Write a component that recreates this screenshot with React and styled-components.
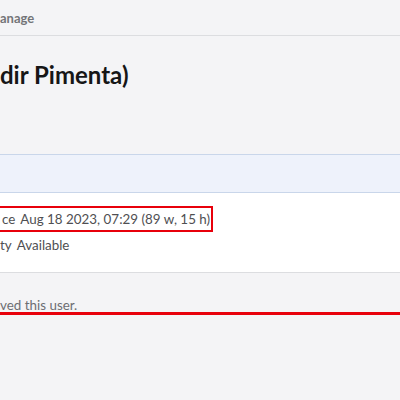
import React from "react";
import styled, { createGlobalStyle } from "styled-components";

const Global = createGlobalStyle`
  html, body { margin: 0; padding: 0; background: #f4f4f6; }
  body { font-family: Lato, "Open Sans", sans-serif; overflow: hidden; }
`;

const Page = styled.div`
  width: 400px;
  height: 400px;
  overflow: hidden;
  background: #f4f4f6;
  display: flex;
  flex-direction: column;
`;

const TopBar = styled.div`
  height: 36px;
  border-bottom: 1px solid #dcdde0;
  display: flex;
  align-items: center;
  font-size: 13px;
  font-weight: 700;
  color: #737478;
  box-sizing: border-box;
  padding-top: 1px;
`;

const Title = styled.h1`
  margin: 25px 0 0;
  font-size: 24px;
  font-weight: 700;
  color: #161616;
  line-height: 28px;
  white-space: nowrap;
`;

const Band = styled.div`
  margin-top: 65px;
  height: 37px;
  background: #eef2fb;
  border-top: 1px solid #c9d6ea;
  border-bottom: 1px solid #c9d6ea;
`;

const Panel = styled.div`
  background: #ffffff;
  padding: 13px 0 0;
  height: 80px;
  box-sizing: border-box;
  border-bottom: 1px solid #dcdde0;
  font-size: 13.4px;
  color: #4f4f52;
  display: flex;
  flex-direction: column;
  align-items: flex-start;
`;

const Row = styled.div`
  display: flex;
  align-items: center;
  gap: 5px;
  height: 26px;
  line-height: 17px;
  white-space: nowrap;
  box-sizing: border-box;
  ${(p) =>
    p.$marked &&
    `
    margin-left: -10px;
    padding: 1px 1px 0 10px;
    border: 2px solid #e8000b;
  `}
`;

const Label = styled.span`
  color: #4f4f52;
`;

const Value = styled.span`
  color: #4f4f52;
`;

const Footer = styled.div`
  padding-top: 24px;
  font-size: 13.4px;
  color: #6d6e72;
  line-height: 17px;
  white-space: nowrap;
`;

const RedLine = styled.div`
  height: 3px;
  background: #e8000b;
  margin-top: -2px;
`;

export default function App() {
  return (
    <Page>
      <Global />
      <TopBar>anage</TopBar>
      <Title>dir Pimenta)</Title>
      <Band />
      <Panel>
        <Row $marked>
          <Label>ce</Label>
          <Value>Aug 18 2023, 07:29 (89 w, 15 h)</Value>
        </Row>
        <Row>
          <Label>ty</Label>
          <Value>Available</Value>
        </Row>
      </Panel>
      <Footer>ved this user.</Footer>
      <RedLine />
    </Page>
  );
}
